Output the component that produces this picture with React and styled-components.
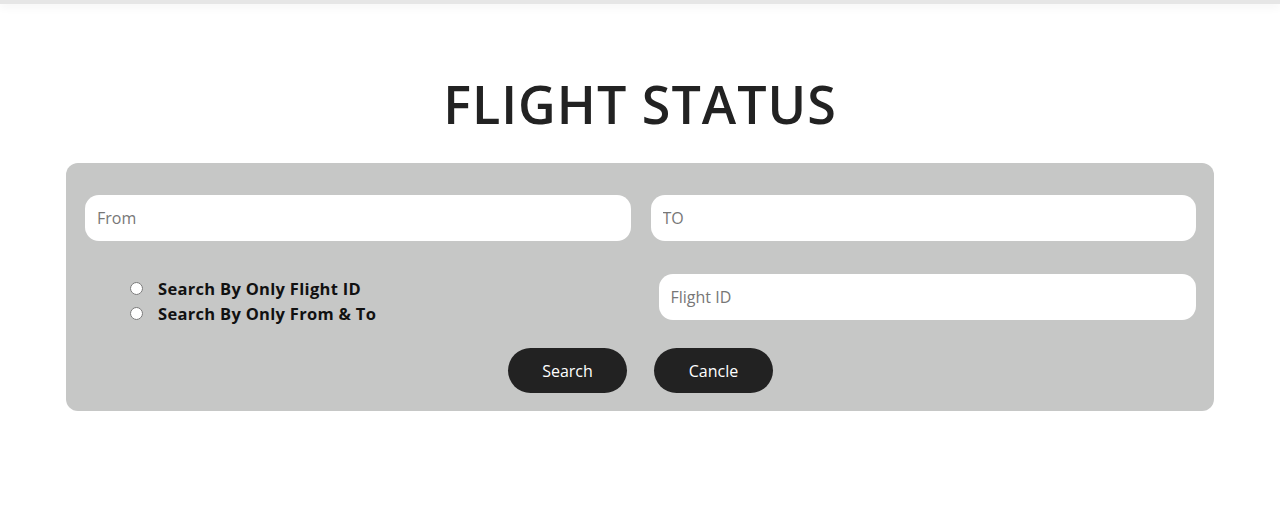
import React from "react"
import styled, { createGlobalStyle } from "styled-components"

const GlobalStyle = createGlobalStyle`
  * {
    box-sizing: border-box;
  }

  body {
    margin: 0;
    background: #fff;
    font-family: "Open Sans", "Liberation Sans", sans-serif;
    color: #222;
  }
`

const TopBar = styled.div`
  height: 4px;
  background: #e6e6e6;
  box-shadow: 0 2px 10px rgba(0, 0, 0, 0.08);
`

const Page = styled.main`
  padding: 0 66px;
`

const Title = styled.h1`
  margin: 0;
  padding-top: 67px;
  padding-bottom: 26px;
  text-align: center;
  font-family: "Open Sans", "Liberation Sans", sans-serif;
  font-size: 52px;
  font-weight: 600;
  line-height: 66px;
  letter-spacing: 1px;
  color: #222;
`

const Panel = styled.form`
  background: #c6c7c6;
  border-radius: 12px;
  padding: 32px 18px 18px 19px;
`

const Row = styled.div`
  display: grid;
  grid-template-columns: 1fr 1fr;
  gap: 20px;
  align-items: start;
`

const SecondRow = styled(Row)`
  margin-top: 33px;
`

const Field = styled.input`
  display: block;
  width: 100%;
  height: 46px;
  border: none;
  border-radius: 14px;
  background: #fff;
  padding: 0 12px;
  font-family: "Open Sans", "Liberation Sans", sans-serif;
  font-size: 16px;
  color: #333;
  outline: none;

  &::placeholder {
    color: #777;
  }
`

const FieldCell = styled.div`
  padding-left: 8px;
`

const RadioGroup = styled.div`
  display: flex;
  flex-direction: column;
  gap: 6px;
  height: 46px;
  padding-left: 45px;
  padding-top: 5px;
`

const RadioLabel = styled.label`
  display: flex;
  align-items: center;
  gap: 15px;
  font-family: "Open Sans", "Liberation Sans", sans-serif;
  font-size: 16.5px;
  font-weight: 700;
  line-height: 19px;
  letter-spacing: 0.3px;
  color: #111;
`

const Radio = styled.input`
  margin: 0;
  width: 13px;
  height: 13px;
`

const Actions = styled.div`
  display: flex;
  justify-content: center;
  gap: 27px;
  margin-top: 28px;
`

const Button = styled.button`
  width: 119px;
  height: 45px;
  border: none;
  border-radius: 23px;
  background: #222;
  color: #fff;
  font-family: "Open Sans", "Liberation Sans", sans-serif;
  font-size: 16px;
  cursor: pointer;
`

const App = () => {
  return (
    <>
      <GlobalStyle />
      <TopBar />
      <Page>
        <Title>FLIGHT STATUS</Title>
        <Panel onSubmit={(e) => e.preventDefault()}>
          <Row>
            <Field placeholder="From" />
            <Field placeholder="TO" />
          </Row>
          <SecondRow>
            <RadioGroup>
              <RadioLabel>
                <Radio type="radio" name="mode" />
                Search By Only Flight ID
              </RadioLabel>
              <RadioLabel>
                <Radio type="radio" name="mode" />
                Search By Only From &amp; To
              </RadioLabel>
            </RadioGroup>
            <FieldCell>
              <Field placeholder="Flight ID" />
            </FieldCell>
          </SecondRow>
          <Actions>
            <Button type="submit">Search</Button>
            <Button type="button">Cancle</Button>
          </Actions>
        </Panel>
      </Page>
    </>
  )
}

export default App
